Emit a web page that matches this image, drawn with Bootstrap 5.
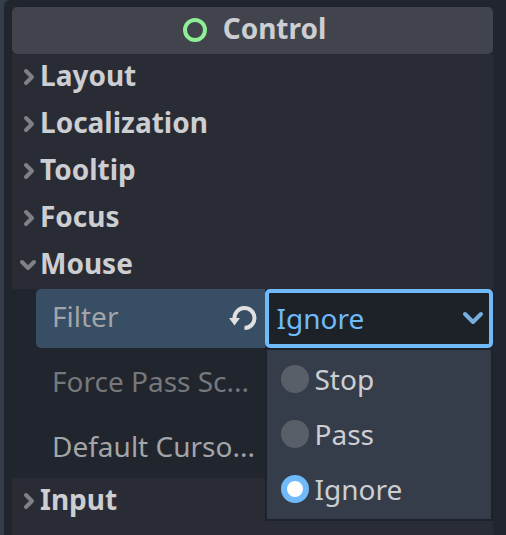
<!DOCTYPE html>
<html lang="en" data-bs-theme="dark">
<head>
<meta charset="utf-8">
<meta name="viewport" content="width=device-width, initial-scale=1">
<title>Inspector – Control</title>
<link href="https://cdn.jsdelivr.net/npm/bootstrap@5.3.0/dist/css/bootstrap.min.css" rel="stylesheet">
<style>
  body {
    background: #353d4a;
    color: #cdced2;
    font-family: "Noto Sans", "Open Sans", sans-serif;
    font-size: 28px;
    line-height: 38px;
  }
  .inspector {
    background: #21252e;
    border-top-left-radius: 6px;
    margin-left: 4px;
    padding: 7px 13px 0 8px;
  }
  .class-title {
    background: #41444c;
    border-radius: 5px;
    color: #cdced2;
    font-size: 28px;
    line-height: 38px;
    gap: 16px;
    height: 47px;
    padding: 0 0 6px 4px;
  }
  .class-title svg { margin-top: 4px; }
  .section-toggle {
    background: #292c35;
    border: 0;
    color: inherit;
    font-weight: 700;
    gap: 4px;
    height: 47px;
    padding: 0 8px 6px;
  }
  .section-toggle svg { margin-top: 4px; }
  .last-section { background: #292c35; }
  .properties {
    gap: 6px;
    padding-left: 24px;
  }
  .property { min-height: 59px; }
  .property-name {
    color: #a4a5a8;
    padding: 0 8px 6px 16px;
  }
  .property-name.inactive { color: #77787b; }
  .property-name.selected {
    background: #384e65;
    border-radius: 5px 0 0 5px;
  }
  .revert {
    background: none;
    border: 0;
    line-height: 0;
    padding: 4px 0 0;
  }
  .enum-select {
    background-color: #1d2229;
    background-image: none;
    border: 4px solid #70bafa;
    border-radius: 5px;
    color: #70bafa;
    font-size: 28px;
    height: 59px;
    line-height: 38px;
    padding: 0 36px 2px 8px;
  }
  .enum-select:focus { border-color: #70bafa; box-shadow: none; }
  .enum-arrow {
    pointer-events: none;
    right: 9px;
    top: 22px;
  }
  .enum-menu {
    background: #363d4a;
    border: 2px solid #1e222b;
    left: 0;
    padding: 2px 0;
    right: 0;
    top: 100%;
    z-index: 10;
  }
  .enum-item {
    gap: 6px;
    height: 55px;
    padding: 0 0 2px 14px;
  }
  .enum-item .form-check-input {
    background-color: #595f69;
    background-image: none;
    border: 0;
    height: 28px;
    margin: 0;
    width: 28px;
  }
  .enum-item .form-check-input:checked {
    background-color: #fff;
    border: 6px solid #70bafa;
  }
</style>
</head>
<body>
<svg class="d-none" aria-hidden="true">
  <symbol id="chevron-right" viewBox="0 0 16 20">
    <path d="M6 4l6 6-6 6" fill="none" stroke="#7f8186" stroke-width="4" stroke-linecap="round" stroke-linejoin="round"/>
  </symbol>
  <symbol id="chevron-down" viewBox="0 0 16 20">
    <path d="M2 7l6 6 6-6" fill="none" stroke="#7f8186" stroke-width="4" stroke-linecap="round" stroke-linejoin="round"/>
  </symbol>
</svg>
<main class="inspector d-flex flex-column min-vh-100">
  <h1 class="class-title d-flex align-items-center justify-content-center fw-bold m-0">
    <svg width="24" height="24" viewBox="0 0 24 24" aria-hidden="true"><circle cx="12" cy="12" r="10" fill="none" stroke="#8eef97" stroke-width="4"/></svg>
    Control
  </h1>
  <button type="button" class="section-toggle d-flex align-items-center w-100" aria-expanded="false"><svg width="16" height="20" aria-hidden="true"><use href="#chevron-right"/></svg>Layout</button>
  <button type="button" class="section-toggle d-flex align-items-center w-100" aria-expanded="false"><svg width="16" height="20" aria-hidden="true"><use href="#chevron-right"/></svg>Localization</button>
  <button type="button" class="section-toggle d-flex align-items-center w-100" aria-expanded="false"><svg width="16" height="20" aria-hidden="true"><use href="#chevron-right"/></svg>Tooltip</button>
  <button type="button" class="section-toggle d-flex align-items-center w-100" aria-expanded="false"><svg width="16" height="20" aria-hidden="true"><use href="#chevron-right"/></svg>Focus</button>
  <button type="button" class="section-toggle d-flex align-items-center w-100" aria-expanded="true"><svg width="16" height="20" aria-hidden="true"><use href="#chevron-down"/></svg>Mouse</button>

  <div class="properties d-flex flex-column">
    <div class="property row g-0">
      <div class="property-name selected col-6 d-flex align-items-center justify-content-between">
        <label for="filter">Filter</label>
        <button type="button" class="revert" aria-label="Revert value">
          <svg width="28" height="26" viewBox="0 0 28 26" aria-hidden="true">
            <path d="M5.500 13.500A10 10 0 1 1 15.500 23" fill="none" stroke="#e0e0e0" stroke-width="4"/>
            <path d="M0 13h11l-5.500 7.500z" fill="#e0e0e0"/>
          </svg>
        </button>
      </div>
      <div class="col-6 position-relative">
        <select id="filter" class="enum-select form-select">
          <option>Stop</option>
          <option>Pass</option>
          <option selected>Ignore</option>
        </select>
        <svg class="enum-arrow position-absolute" width="22" height="14" viewBox="0 0 22 14" aria-hidden="true"><path d="M3 3l8 8 8-8" fill="none" stroke="#77aedd" stroke-width="4" stroke-linecap="round" stroke-linejoin="round"/></svg>
        <div class="enum-menu position-absolute" role="radiogroup" aria-label="Filter options">
          <div class="enum-item d-flex align-items-center">
            <input class="form-check-input" type="radio" name="filter-mode" id="mode-stop" value="Stop">
            <label for="mode-stop">Stop</label>
          </div>
          <div class="enum-item d-flex align-items-center">
            <input class="form-check-input" type="radio" name="filter-mode" id="mode-pass" value="Pass">
            <label for="mode-pass">Pass</label>
          </div>
          <div class="enum-item d-flex align-items-center">
            <input class="form-check-input" type="radio" name="filter-mode" id="mode-ignore" value="Ignore" checked>
            <label for="mode-ignore">Ignore</label>
          </div>
        </div>
      </div>
    </div>
    <div class="property row g-0">
      <div class="property-name inactive col-6 d-flex align-items-center text-nowrap">Force Pass Sc...</div>
    </div>
    <div class="property row g-0">
      <div class="property-name col-6 d-flex align-items-center text-nowrap">Default Curso...</div>
    </div>
  </div>

  <div class="last-section flex-grow-1">
    <button type="button" class="section-toggle d-flex align-items-center w-100" aria-expanded="false"><svg width="16" height="20" aria-hidden="true"><use href="#chevron-right"/></svg>Input</button>
  </div>
</main>
<script src="https://cdn.jsdelivr.net/npm/bootstrap@5.3.0/dist/js/bootstrap.bundle.min.js"></script>
<script>
  const filter = document.getElementById('filter');
  const modes = document.querySelectorAll('input[name="filter-mode"]');
  modes.forEach(mode => mode.addEventListener('change', () => { filter.value = mode.value; }));
  filter.addEventListener('change', () => modes.forEach(mode => { mode.checked = mode.value === filter.value; }));
</script>
</body>
</html>
